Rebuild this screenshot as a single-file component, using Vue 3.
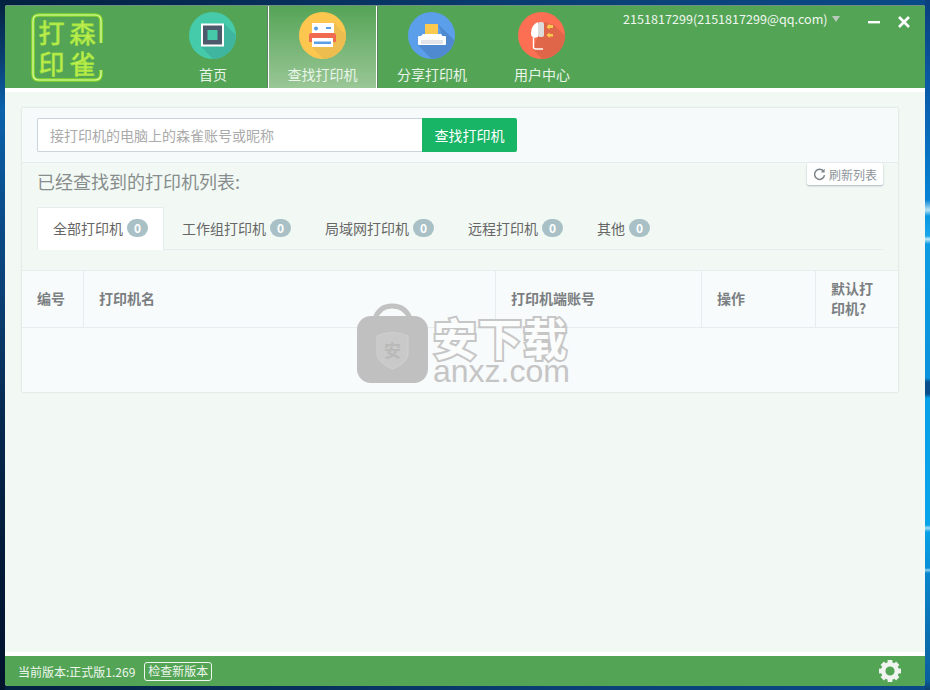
<template>
  <div class="desktop">
    <div class="window">
      <header class="topbar">
        <div class="logo-area">
          <div class="logo">
            <svg class="logo-frame" width="74" height="71" viewBox="0 0 74 71">
              <path d="M71 31 V9 Q71 3 65 3 H9 Q3 3 3 9 V62 Q3 68 9 68 H65 Q71 68 71 62 V58" fill="none" stroke="#86d92a" stroke-width="3.6" />
              <path d="M71 31 V9 Q71 3 65 3 H9 Q3 3 3 9 V62 Q3 68 9 68 H65 Q71 68 71 62 V58" fill="none" stroke="#e2f9a8" stroke-width="1.2" />
            </svg>
            <span>打</span><span>森</span><span>印</span><span>雀</span>
          </div>
        </div>
        <nav class="nav">
          <a v-for="(item, index) in navItems" :key="item.label" class="nav-item" :class="{ active: index === 1 }">
            <svg width="47" height="47" viewBox="0 0 47 47" class="nav-icon">
              <clipPath :id="`nav-clip-${index}`"><circle cx="23.5" cy="23.5" r="23.5" /></clipPath>
              <circle cx="23.5" cy="23.5" r="23.5" :fill="item.color" />
              <path :d="item.shadow" :fill="item.shade" :clip-path="`url(#nav-clip-${index})`" />
              <template v-if="index === 0">
                <rect x="12" y="11.5" width="23" height="23" fill="#fff" />
                <rect x="14" y="13.5" width="19" height="19" fill="#4d5a6b" />
                <rect x="18.5" y="18" width="10" height="10" fill="#45c9a8" />
              </template>
              <template v-else-if="index === 1">
                <rect x="13" y="11" width="22" height="11" fill="#fff" />
                <circle cx="17" cy="16.5" r="2" fill="#5b9ee8" />
                <rect x="27" y="15" width="5" height="2" fill="#5b9ee8" />
                <rect x="13" y="26" width="21" height="9" fill="#fff" />
                <path d="M10 30 V23 Q10 21 13 21 H34 Q37 21 37 23 V30 H34 V26 H13 V30 Z" fill="#ef6a4f" />
                <rect x="15" y="29.5" width="17" height="2.5" fill="#5b9ee8" />
              </template>
              <template v-else-if="index === 2">
                <rect x="17" y="12" width="13" height="10" fill="#fcc94f" />
                <path d="M15 22 H33 L35 25 H12 Z" fill="#fff" />
                <rect x="10" y="24" width="28" height="9" rx="1" fill="#fff" />
                <rect x="13" y="28" width="22" height="4" fill="#e1e5ea" />
              </template>
              <template v-else>
                <path d="M20 10 Q13 13 13 21 Q13 25 16 26 L20 25 Z" fill="#fff" />
                <rect x="20" y="10" width="6" height="15" rx="2" fill="#dcdcdc" />
                <path d="M15.5 26 V35 Q15.5 37 18 37 H25" fill="none" stroke="#fff" stroke-width="1.4" />
                <path d="M35 13 H31.5 V11.5 L28.5 15 L31.5 17.5 V16 H35 Z M35 22 H31.5 V20.5 L28.5 23 L31.5 26 V24.5 H35 Z" fill="#fcc94f" />
              </template>
            </svg>
            <span class="nav-label">{{ item.label }}</span>
          </a>
        </nav>
        <div class="user">
          2151817299(2151817299@qq.com)<i class="caret"></i>
        </div>
        <div class="controls">
          <svg width="12" height="12" viewBox="0 0 12 12"><rect x="0" y="5" width="12" height="2.4" fill="#fff" /></svg>
          <svg width="12" height="12" viewBox="0 0 12 12"><path d="M1 1 L11 11 M11 1 L1 11" stroke="#fff" stroke-width="2.6" /></svg>
        </div>
      </header>

      <main class="content">
        <section class="card">
          <div class="search">
            <input class="search-input" type="text" placeholder="接打印机的电脑上的森雀账号或昵称" />
            <button class="search-btn">查找打印机</button>
          </div>
          <div class="list-head">
            <h2>已经查找到的打印机列表:</h2>
            <button class="refresh">
              <svg width="13" height="13" viewBox="0 0 13 13">
                <path d="M10.6 3.4 A5 5 0 1 0 11.5 7.2" fill="none" stroke="#7d858b" stroke-width="1.5" />
                <path d="M11.6 0.8 V4.6 H7.8 Z" fill="#7d858b" />
              </svg>
              刷新列表
            </button>
          </div>
          <ul class="tabs">
            <li v-for="(tab, index) in tabs" :key="tab" class="tab" :class="{ active: index === 0 }">
              {{ tab }}<span class="badge">0</span>
            </li>
          </ul>
          <div class="table">
            <div v-for="col in columns" :key="col" class="th">{{ col }}</div>
            <div class="empty-row"></div>
          </div>
          <div class="watermark">
            <svg width="72" height="80" viewBox="0 0 72 80">
              <path d="M18 16 Q22 3 35 3 Q49 3 53 16" fill="none" stroke="#c2c2c2" stroke-width="5" />
              <rect x="0" y="13" width="71" height="67" rx="14" fill="#c0c0c0" />
              <path d="M20 33 Q36 26 51 33 V52 Q50 60 36 66 Q21 60 20 52 Z" fill="#c9c9c9" stroke="#d0d0d0" />
              <text x="35.5" y="54" text-anchor="middle" class="shield-text">安</text>
            </svg>
            <div class="wm-text">
              <div class="wm-cn">安下载</div>
              <div class="wm-en">anxz.com</div>
            </div>
          </div>
        </section>
      </main>

      <footer class="statusbar">
        <span>当前版本:正式版1.269</span>
        <button class="check">检查新版本</button>
        <svg class="gear" width="24" height="24" viewBox="0 0 24 24">
          <rect v-for="deg in teeth" :key="deg" x="9.6" y="1" width="4.8" height="5" fill="#f0f3ef" :transform="`rotate(${deg} 12 12)`" />
          <circle cx="12" cy="12" r="6.8" fill="none" stroke="#f0f3ef" stroke-width="4.4" />
        </svg>
      </footer>
    </div>
  </div>
</template>

<script setup>
const navItems = [
  { label: '首页', color: '#45cba9', shade: '#3fb59f', shadow: 'M35 11.5 L60 36 V60 H36 L12 34.5 Z' },
  { label: '查找打印机', color: '#fdc74f', shade: '#edbd50', shadow: 'M35 11 L60 36 V60 H36 L13 35 Z' },
  { label: '分享打印机', color: '#5b9eea', shade: '#4f89d0', shadow: 'M30 12 L60 42 V60 H36 L10 33 H38 Z' },
  { label: '用户中心', color: '#fc6f52', shade: '#e0664a', shadow: 'M26 10 L36 13 L60 36 V60 H36 L15 37 Z' },
]

const tabs = ['全部打印机', '工作组打印机', '局域网打印机', '远程打印机', '其他']
const columns = ['编号', '打印机名', '打印机端账号', '操作', '默认打印机?']
const teeth = [0, 45, 90, 135, 180, 225, 270, 315]
</script>

<style>
html,
body {
  margin: 0;
  overflow: hidden;
}
</style>

<style scoped>
.desktop {
  box-sizing: border-box;
  width: 930px;
  height: 690px;
  padding: 5px 5px 4px;
  font-family: "Noto Sans CJK SC", "Liberation Sans", sans-serif;
  background:
    linear-gradient(180deg, #0a3f7c 0, #0a5fae 100px, #0683d4 200px, #b9e4f6 210px, #0a96e0 216px, #19a7ea 236px, #c4ebf9 239px, #0c9be2 244px, #0a93dc 378px, #0a4f8c 382px, #0a4f8c 394px, #08a0e6 398px, #08a4ea 525px, #9fdcf5 528px, #08a0e6 532px, #0a8fd6 568px, #8ed2f0 570px, #0a86cc 573px, #0a5f9e 680px, #0a3f70 690px) right / 5px 100% no-repeat,
    linear-gradient(180deg, #04213f 0, #0a3f74 60px, #0a63ac 110px, #0a4f8e 200px, #0a3f74 300px, #06294f 420px, #031a38 560px, #02132c 690px) left / 5px 100% no-repeat,
    linear-gradient(90deg, #03203f 0, #0a3f74 60%, #0a4a88 100%);
}

.window {
  display: flex;
  flex-direction: column;
  height: 100%;
  border-radius: 3px;
  overflow: hidden;
  background: #f2f9f4;
}

.topbar {
  display: flex;
  flex: none;
  height: 83px;
  box-sizing: border-box;
  border-top: 1px solid #6f8f80;
  background: #54a456;
}

.logo-area {
  flex: none;
  width: 153px;
  padding: 6px 0 0 25px;
  box-sizing: border-box;
}

.logo {
  position: relative;
  display: grid;
  grid-template-columns: 28px 28px;
  grid-auto-rows: 28px;
  justify-content: center;
  align-content: center;
  gap: 3px;
  width: 74px;
  height: 71px;
  font-size: 26px;
  line-height: 28px;
  text-align: center;
  color: #c4ef56;
  -webkit-text-stroke: 0.8px #a6e63c;
}

.logo-frame {
  position: absolute;
  left: 0;
  top: 0;
}

.nav {
  display: flex;
  flex: none;
}

.nav-item {
  display: flex;
  flex-direction: column;
  align-items: center;
  width: 110px;
  padding-top: 6px;
  box-sizing: border-box;
}

.nav-item.active {
  width: 109px;
  background: linear-gradient(180deg, #55a457 0, #9ac796 100%);
  box-shadow: -1px 0 0 #5f7f66, 1px 0 0 #5f7f66, inset 1px 0 0 #fff, inset -1px 0 0 #fff;
}

.nav-icon {
  flex: none;
  margin-right: 1px;
}

.nav-label {
  margin-top: 5px;
  font-size: 14px;
  line-height: 20px;
  color: #e9f5e9;
}

.user {
  margin: 3px 0 0 26px;
  font-size: 12.6px;
  line-height: 20px;
  white-space: nowrap;
  color: #eef7ee;
}

.caret {
  display: inline-block;
  margin: 0 0 3px 4px;
  border-left: 4px solid transparent;
  border-right: 4px solid transparent;
  border-top: 6px solid #b9c9b9;
  vertical-align: middle;
}

.controls {
  display: flex;
  gap: 18px;
  margin: 10px 15px 0 auto;
}

.content {
  flex: 1;
  box-sizing: border-box;
  padding: 16px 27px 0 17px;
  border-top: 4px solid #fff;
  border-bottom: 4px solid #fff;
}

.card {
  position: relative;
  height: 284px;
  background: #f2f9f4;
  box-shadow: 0 0 2px rgba(90, 110, 110, 0.28);
}

.search {
  display: flex;
  box-sizing: border-box;
  height: 55px;
  padding: 10px 15px;
  background: #f7fafb;
  border-bottom: 1px solid #e6edee;
}

.search-input {
  box-sizing: border-box;
  width: 385px;
  height: 34px;
  padding: 0 12px;
  border: 1px solid #c9d4dd;
  border-right: 0;
  border-radius: 2px 0 0 2px;
  outline: none;
  background: #fff;
  font: 14px "Noto Sans CJK SC", sans-serif;
}

.search-input::placeholder {
  color: #aaa;
  opacity: 1;
}

.search-btn {
  width: 95px;
  height: 34px;
  border: 0;
  border-radius: 0 2px 2px 0;
  background: #18b566;
  color: #fff;
  font: 14px "Noto Sans CJK SC", sans-serif;
}

.list-head {
  display: flex;
  justify-content: space-between;
  align-items: flex-start;
  height: 44px;
  padding: 0 15px;
}

.list-head h2 {
  margin: 6px 0 0;
  font-size: 18px;
  font-weight: 400;
  line-height: 24px;
  color: #878d8d;
}

.refresh {
  display: flex;
  align-items: center;
  gap: 3px;
  box-sizing: border-box;
  width: 76px;
  height: 22px;
  padding: 0 0 0 6px;
  border: 0;
  border-radius: 2px;
  background: #fff;
  box-shadow: 0 1px 2px rgba(80, 100, 130, 0.45);
  color: #8d949a;
  font: 12px "Noto Sans CJK SC", sans-serif;
}

.tabs {
  display: flex;
  gap: 2px;
  box-sizing: border-box;
  height: 43px;
  margin: 0 15px;
  padding: 0;
  list-style: none;
  border-bottom: 1px solid #e6edee;
}

.tab {
  display: flex;
  align-items: center;
  box-sizing: border-box;
  height: 43px;
  padding: 0 15px 2px;
  font-size: 14px;
  color: #666;
  border: 1px solid transparent;
  border-bottom: 0;
}

.tab.active {
  background: #fff;
  border-color: #e6edee;
}

.badge {
  display: block;
  width: 21px;
  height: 18px;
  margin-left: 4px;
  border-radius: 9px;
  background: #a9c1c6;
  color: #fff;
  font-size: 12px;
  font-weight: 700;
  line-height: 18px;
  text-align: center;
}

.table {
  display: grid;
  grid-template-columns: 62px 412px 206px 114px 82px;
  margin-top: 20px;
  background: #f8fbfc;
  border-top: 1px solid #e6edee;
}

.th {
  display: flex;
  align-items: center;
  box-sizing: border-box;
  height: 57px;
  padding: 0 15px 2px;
  font-size: 14px;
  font-weight: 700;
  line-height: 20px;
  color: #7b7f82;
  border-right: 1px solid #e6edee;
  border-bottom: 1px solid #e6edee;
}

.th:nth-child(5) {
  border-right: 0;
}

.empty-row {
  grid-column: 1 / -1;
  height: 64px;
}

.watermark {
  position: absolute;
  left: 335px;
  top: 195px;
  display: flex;
  gap: 4px;
}

.shield-text {
  font-size: 17px;
  font-weight: 700;
  fill: #b9b9b9;
}

.wm-text {
  padding-top: 12px;
}

.wm-cn {
  font-size: 44px;
  line-height: 44px;
  font-weight: 700;
  letter-spacing: 1px;
  color: #fbfcfc;
  -webkit-text-stroke: 4px #c6c6c6;
  paint-order: stroke fill;
}

.wm-en {
  margin-top: 0;
  font-family: "Liberation Sans", sans-serif;
  font-size: 32px;
  line-height: 24px;
  color: #c5c5c5;
}

.statusbar {
  display: flex;
  flex: none;
  align-items: center;
  height: 30px;
  padding: 0 23px 0 13px;
  background: #54a456;
  font-size: 12px;
  color: #eef7ee;
}

.check {
  height: 19px;
  margin-left: 9px;
  padding: 0 3px;
  border: 1px solid #eef7ee;
  border-radius: 3px;
  background: transparent;
  color: #eef7ee;
  font: 12px/16px "Noto Sans CJK SC", sans-serif;
}

.gear {
  margin-left: auto;
}
</style>
